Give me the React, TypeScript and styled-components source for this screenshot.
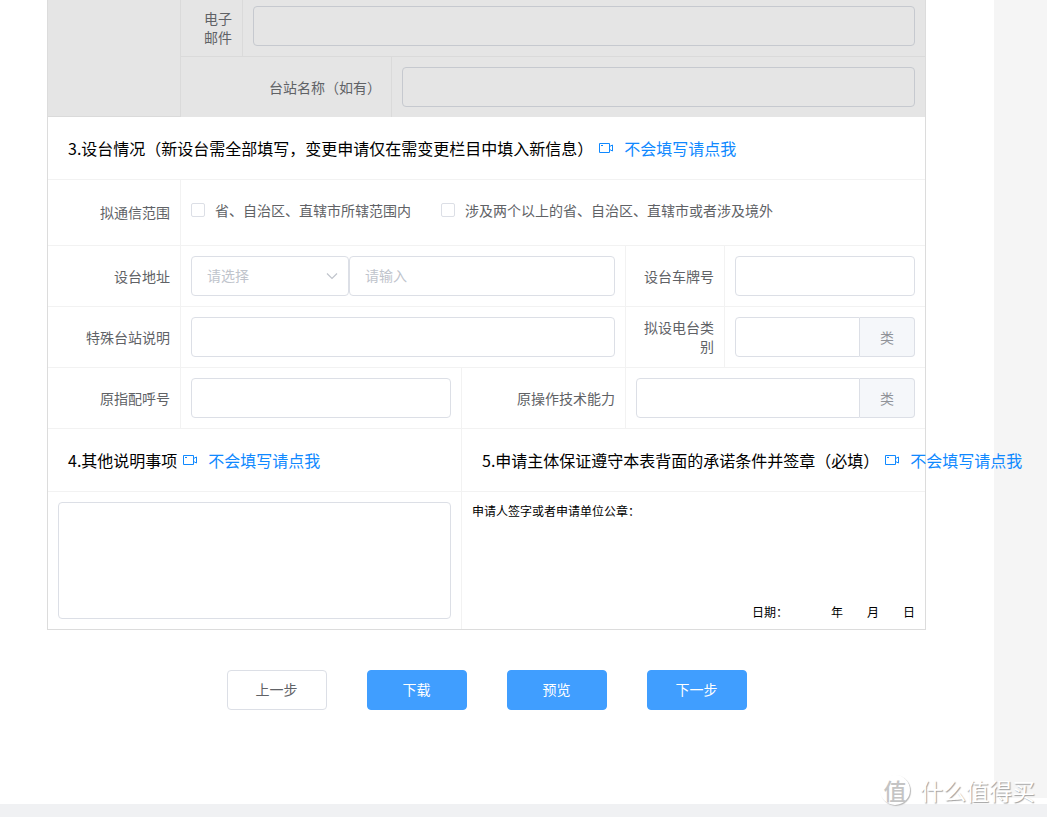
import React, { useId } from "react";
import styled, { createGlobalStyle, css } from "styled-components";

const Global = createGlobalStyle`
  *, *::before, *::after { box-sizing: border-box; }
  body {
    margin: 0;
    background: #ffffff;
    color: #000000;
    font-family: "Noto Sans CJK SC", "Microsoft YaHei", sans-serif;
    font-size: 14px;
  }
  button, input, select, textarea { font: inherit; }
`;

const Shell = styled.div`
  position: relative;
  display: flex;
  flex-direction: column;
  min-height: 100vh;
  background: #f0f1f3;
  overflow: hidden;
`;

const Body = styled.div`
  padding-right: 53px;
  background: #f5f5f5;
`;

const Main = styled.main`
  padding: 0 68px 88px 47px;
  background: #ffffff;
`;

const PageEnd = styled.div`
  height: 6px;
  background: #ffffff;
`;

const FormTable = styled.div`
  border: 1px solid #dcdcdc;
  border-top: 0;
`;

const Row = styled.div`
  display: flex;
  border-bottom: 1px solid #f2f2f2;

  &:last-child { border-bottom: 0; }
`;

const LockedArea = styled.div`
  display: flex;
  background: #e5e5e5;
`;

const LockedSide = styled.div`
  width: 133px;
  flex: none;
  border-right: 1px solid #dadada;
  border-bottom: 1px solid #dadada;
`;

const LockedRows = styled.div`
  flex: 1;
  min-width: 0;

  ${Row} { border-color: #dadada; }
`;

const LabelCell = styled.div<{ $width: number; $locked?: boolean }>`
  display: flex;
  align-items: center;
  justify-content: flex-end;
  flex: none;
  width: ${(p) => p.$width}px;
  padding: 0 10px 0 ${(p) => (p.$locked ? 20 : 10)}px;
  border-right: 1px solid ${(p) => (p.$locked ? "#dadada" : "#f2f2f2")};
  color: #606266;
  line-height: 19px;
  text-align: right;
`;

const FieldCell = styled.div<{ $width?: number; $divider?: boolean; $top?: number }>`
  display: flex;
  min-width: 0;
  flex: ${(p) => (p.$width ? "none" : "1")};
  ${(p) => p.$width && css`width: ${p.$width}px;`}
  padding: ${(p) => p.$top ?? 10}px 10px 10px;
  ${(p) => p.$divider && css`border-right: 1px solid #f2f2f2;`}
`;

const control = css`
  min-width: 0;
  height: 40px;
  padding: 0 15px 2px;
  border: 1px solid #dcdfe6;
  border-radius: 4px;
  background: #ffffff;
  color: #606266;
  outline: none;

  &::placeholder { color: #c0c4cc; opacity: 1; }
  &:focus { border-color: #409eff; }
`;

const TextInput = styled.input<{ $joined?: boolean }>`
  ${control}
  flex: 1;
  width: 100%;
  ${(p) => p.$joined && css`border-radius: 4px 0 0 4px;`}

  &:disabled {
    border-color: #c6c9cf;
    background: transparent;
  }
`;

const Unit = styled.span`
  display: flex;
  align-items: center;
  justify-content: center;
  flex: none;
  width: 55px;
  height: 40px;
  border: 1px solid #dcdfe6;
  border-left: 0;
  border-radius: 0 4px 4px 0;
  background: #f5f7fa;
  color: #909399;
`;

const SelectBox = styled.div`
  position: relative;
  flex: none;
  width: 158px;

  svg {
    position: absolute;
    top: 16px;
    right: 11px;
    pointer-events: none;
  }
`;

const Select = styled.select`
  ${control}
  width: 100%;
  appearance: none;
  color: #c0c4cc;
`;

const TextArea = styled.textarea`
  ${control}
  flex: 1;
  height: 117px;
  padding: 5px 15px;
  resize: none;
`;

const CheckGroup = styled.div`
  display: flex;
  align-items: center;
  gap: 30px;
  height: 45px;
  padding-bottom: 5px;
`;

const CheckLabel = styled.label`
  display: flex;
  align-items: center;
  gap: 10px;
  color: #606266;
  line-height: 19px;
  white-space: nowrap;
`;

const CheckBox = styled.input`
  appearance: none;
  width: 14px;
  height: 14px;
  margin: 0;
  border: 1px solid #dcdfe6;
  border-radius: 2px;
  background: #ffffff;

  &:checked { border-color: #409eff; background: #409eff; }
`;

const TitleCell = styled.div<{ $width?: number; $divider?: boolean }>`
  display: flex;
  align-items: center;
  flex: ${(p) => (p.$width ? "none" : "1")};
  ${(p) => p.$width && css`width: ${p.$width}px;`}
  min-width: 0;
  height: 62px;
  padding-left: 20px;
  white-space: nowrap;
  ${(p) => p.$divider && css`border-right: 1px solid #f2f2f2;`}
`;

const Title = styled.h2`
  margin: 0 5px 0 0;
  font-size: 16px;
  font-weight: 400;
  line-height: 24px;
`;

const HelpLink = styled.a`
  display: flex;
  align-items: center;
  gap: 10px;
  color: #1089ff;
  font-size: 16px;
  line-height: 24px;
  text-decoration: none;

  svg { flex: none; }
`;

const SignCell = styled.div`
  display: flex;
  flex-direction: column;
  justify-content: space-between;
  flex: none;
  width: 463px;
  padding: 10px 10px 8px;
  font-size: 12px;
  line-height: 18px;
`;

const DateLine = styled.div`
  display: flex;
  justify-content: flex-end;
  gap: 24px;
`;

const DateCaption = styled.span`
  margin-right: 19px;
`;

const Actions = styled.div`
  display: flex;
  justify-content: center;
  gap: 40px;
  padding-top: 40px;
`;

const Button = styled.button<{ $primary?: boolean }>`
  width: 100px;
  height: 40px;
  padding: 0 0 2px;
  border: 1px solid ${(p) => (p.$primary ? "#409eff" : "#dcdfe6")};
  border-radius: 4px;
  background: ${(p) => (p.$primary ? "#409eff" : "#ffffff")};
  color: ${(p) => (p.$primary ? "#ffffff" : "#606266")};
  cursor: pointer;
`;

const Watermark = styled.div`
  position: absolute;
  right: 12px;
  bottom: 10px;
  display: flex;
  align-items: center;
  gap: 10px;
  color: #ffffff;
  font-size: 23px;
  line-height: 34px;
  text-shadow: 1px 1px 1px #a0a0a0;
`;

const Seal = styled.span`
  display: flex;
  align-items: center;
  justify-content: center;
  width: 30px;
  height: 30px;
  border-radius: 50%;
  background: #ffffff;
  box-shadow: 1px 1px 1px #b8b8b8;
  color: #c4c4c4;
  font-weight: 500;
  text-shadow: none;
`;

const VideoIcon = () => (
  <svg width="16" height="16" viewBox="0 0 16 16" fill="none" stroke="currentColor" aria-hidden="true">
    <path d="M1.5 3.5h10v9h-10z" />
    <path d="M11.5 6.5l3-1.5v6l-3-1.5M3 5.5h2" />
  </svg>
);

const Chevron = () => (
  <svg width="12" height="8" viewBox="0 0 12 8" fill="none" stroke="#c0c4cc" strokeWidth="1.2" aria-hidden="true">
    <path d="M1 1.5l5 5 5-5" />
  </svg>
);

const Help = () => (
  <HelpLink href="#help">
    <VideoIcon />
    不会填写请点我
  </HelpLink>
);

interface FieldProps {
  label: string;
  labelWidth: number;
  width?: number;
  divider?: boolean;
  unit?: string;
  disabled?: boolean;
  top?: number;
}

function Field({ label, labelWidth, width, divider, unit, disabled, top }: FieldProps) {
  const id = useId();
  return (
    <>
      <LabelCell $width={labelWidth} $locked={disabled}>
        <label htmlFor={id}>{label}</label>
      </LabelCell>
      <FieldCell $width={width} $divider={divider} $top={top}>
        <TextInput id={id} type="text" disabled={disabled} $joined={Boolean(unit)} />
        {unit && <Unit>{unit}</Unit>}
      </FieldCell>
    </>
  );
}

export default function App() {
  return (
    <Shell>
      <Global />
      <Body>
        <Main>
          <FormTable>
            <LockedArea>
              <LockedSide />
              <LockedRows>
                <Row>
                  <Field label="电子邮件" labelWidth={62} disabled top={6} />
                </Row>
                <Row>
                  <Field label="台站名称（如有）" labelWidth={211} disabled />
                </Row>
              </LockedRows>
            </LockedArea>
            <Row>
              <TitleCell>
                <Title>3.设台情况（新设台需全部填写，变更申请仅在需变更栏目中填入新信息）</Title>
                <Help />
              </TitleCell>
            </Row>
            <Row role="group" aria-labelledby="range">
              <LabelCell $width={133} id="range">拟通信范围</LabelCell>
              <FieldCell>
                <CheckGroup>
                  <CheckLabel>
                    <CheckBox type="checkbox" />
                    省、自治区、直辖市所辖范围内
                  </CheckLabel>
                  <CheckLabel>
                    <CheckBox type="checkbox" />
                    涉及两个以上的省、自治区、直辖市或者涉及境外
                  </CheckLabel>
                </CheckGroup>
              </FieldCell>
            </Row>
            <Row>
              <LabelCell $width={133}>
                <label htmlFor="region">设台地址</label>
              </LabelCell>
              <FieldCell $divider>
                <SelectBox>
                  <Select id="region" defaultValue="">
                    <option value="">请选择</option>
                  </Select>
                  <Chevron />
                </SelectBox>
                <TextInput type="text" placeholder="请输入" aria-label="设台地址" />
              </FieldCell>
              <Field label="设台车牌号" labelWidth={99} width={200} />
            </Row>
            <Row>
              <Field label="特殊台站说明" labelWidth={133} divider />
              <Field label="拟设电台类别" labelWidth={99} width={200} unit="类" />
            </Row>
            <Row>
              <Field label="原指配呼号" labelWidth={133} divider />
              <Field label="原操作技术能力" labelWidth={164} width={299} unit="类" />
            </Row>
            <Row>
              <TitleCell $divider>
                <Title>4.其他说明事项</Title>
                <Help />
              </TitleCell>
              <TitleCell $width={463}>
                <Title>5.申请主体保证遵守本表背面的承诺条件并签章（必填）</Title>
                <Help />
              </TitleCell>
            </Row>
            <Row>
              <FieldCell $divider>
                <TextArea aria-label="其他说明事项" />
              </FieldCell>
              <SignCell>
                <div>申请人签字或者申请单位公章：</div>
                <DateLine>
                  <DateCaption>日期：</DateCaption>
                  <span>年</span>
                  <span>月</span>
                  <span>日</span>
                </DateLine>
              </SignCell>
            </Row>
          </FormTable>
          <Actions>
            <Button type="button">上一步</Button>
            <Button type="button" $primary>下载</Button>
            <Button type="button" $primary>预览</Button>
            <Button type="button" $primary>下一步</Button>
          </Actions>
        </Main>
      </Body>
      <PageEnd />
      <Watermark>
        <Seal>值</Seal>
        什么值得买
      </Watermark>
    </Shell>
  );
}
